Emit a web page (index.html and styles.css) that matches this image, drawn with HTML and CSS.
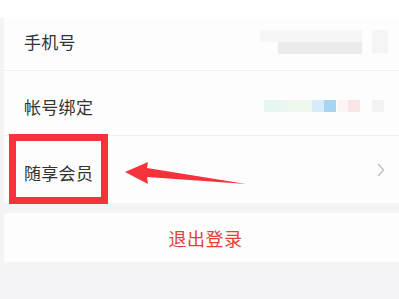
FILE: index.html
```html
<!DOCTYPE html>
<html lang="zh">
<head>
<meta charset="utf-8">
<link rel="stylesheet" href="styles.css">
</head>
<body>
<div class="topband"></div>
<div class="page">
  <div class="card">
    <div class="row row-first">
      <span class="label">手机号</span>
      <div class="masks">
        <div class="mask-phone">
          <span class="m-top"></span>
          <span class="m-bot"></span>
        </div>
        <span class="m-side"></span>
      </div>
    </div>
    <div class="row">
      <span class="label">帐号绑定</span>
      <div class="masks bind">
        <span class="b b1"></span><span class="b b2"></span><span class="b b3"></span><span class="b b4"></span><span class="b b5"></span><span class="gap1"></span><span class="b b6"></span><span class="b b7"></span><span class="gap2"></span><span class="b b8"></span>
      </div>
    </div>
    <div class="row row-last">
      <span class="label">随享会员</span>
      <svg class="chev" width="8" height="14" viewBox="0 0 8 14"><polyline points="1.5,1.5 6.5,7 1.5,12.5" fill="none" stroke="#c2c2c2" stroke-width="1.6" stroke-linecap="round" stroke-linejoin="round"/></svg>
    </div>
  </div>
  <div class="logout">退出登录</div>
</div>
<div class="redbox"></div>
<svg class="arrow" width="399" height="299" viewBox="0 0 399 299">
  <polygon points="125,172 148,162 147,168 246,184 147,177 148,184" fill="#f5333a"/>
</svg>
</body>
</html>
```
FILE: styles.css
```css
html, body {
  margin: 0;
  padding: 0;
}
body {
  width: 399px;
  height: 299px;
  overflow: hidden;
  background: #f4f4f6;
  font-family: "Noto Sans CJK SC", "Noto Sans", sans-serif;
  position: relative;
}
.topband {
  height: 18px;
  background: #ffffff;
}
.page {
  padding-left: 4px;
}
.card {
  background: #fdfdfd;
}
.row {
  height: 65px;
  box-sizing: border-box;
  padding: 6px 14px 0 20px;
  display: flex;
  align-items: center;
  justify-content: space-between;
  border-bottom: 1px solid #f1f1f1;
}
.row-first {
  height: 53px;
  padding-top: 0;
  padding-bottom: 5px;
}
.row-last {
  height: 67px;
  border-bottom: none;
}
.label {
  font-size: 17px;
  color: #333333;
  letter-spacing: 0.3px;
}
.masks {
  display: flex;
  align-items: center;
  gap: 10px;
  margin-right: -3px;
}
.mask-phone {
  display: flex;
  flex-direction: column;
  align-items: flex-end;
}
.m-top {
  display: block;
  width: 102px;
  height: 12px;
  background: #f6f6f6;
}
.m-bot {
  display: block;
  width: 84px;
  height: 12px;
  background: #ebebeb;
}
.m-side {
  display: block;
  width: 16px;
  height: 23px;
  background: #f5f5f5;
}
.bind {
  gap: 0;
  margin-right: 1px;
  margin-top: -1px;
}
.b {
  display: block;
  height: 12px;
}
.b1 { width: 16px; background: #e5f7ef; }
.b2 { width: 8px; background: #eaf6f3; }
.b3 { width: 24px; background: #eef8ee; }
.b4 { width: 12px; background: #d7ebf8; }
.b5 { width: 12px; background: #a6d4f1; }
.gap1 { width: 2px; }
.b6 { width: 10px; background: #fdf5f5; }
.b7 { width: 12px; background: #fae5e6; }
.gap2 { width: 12px; }
.b8 { width: 12px; background: #f3f3f3; }
.chev {
  display: block;
  margin-top: -6px;
}
.logout {
  margin-top: 10px;
  height: 49px;
  background: #fdfdfd;
  display: flex;
  align-items: center;
  justify-content: center;
  padding-left: 8px;
  font-size: 18px;
  color: #e2413f;
  letter-spacing: 0.5px;
}
.redbox {
  position: absolute;
  left: 9px;
  top: 134px;
  width: 85px;
  height: 56px;
  border: 7px solid #f5333a;
}
.arrow {
  position: absolute;
  left: 0;
  top: 0;
}
```
